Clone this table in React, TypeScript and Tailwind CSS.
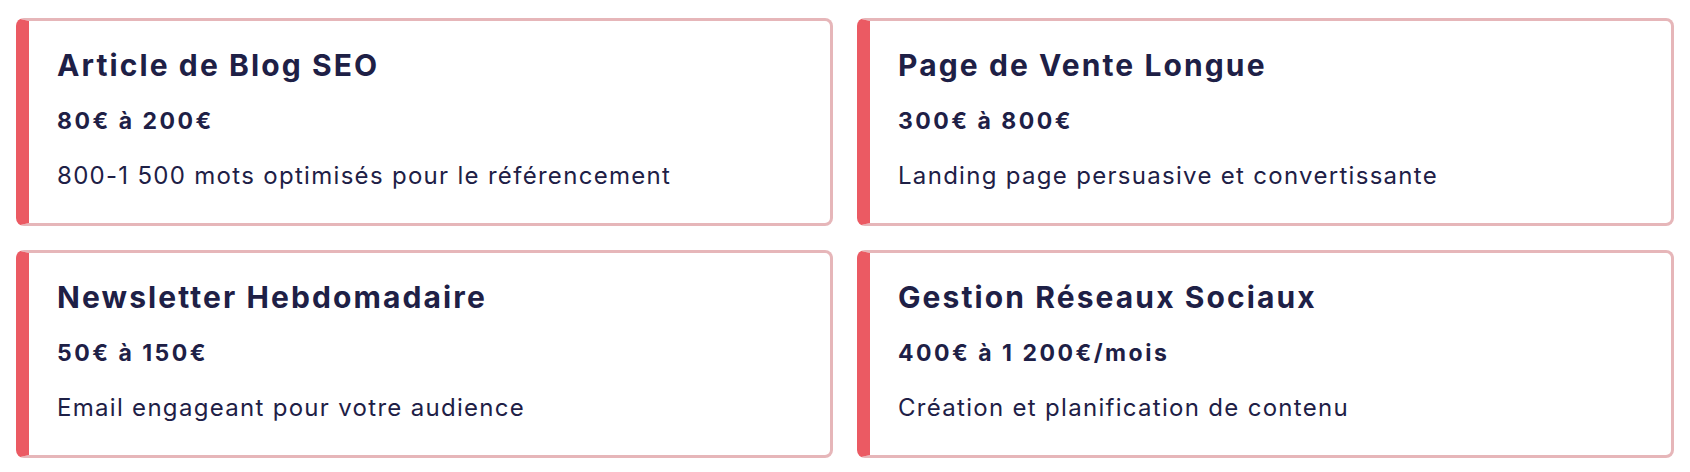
const offers = [
  {
    title: 'Article de Blog SEO',
    price: '80€ à 200€',
    text: '800-1 500 mots optimisés pour le référencement',
  },
  {
    title: 'Page de Vente Longue',
    price: '300€ à 800€',
    text: 'Landing page persuasive et convertissante',
  },
  {
    title: 'Newsletter Hebdomadaire',
    price: '50€ à 150€',
    text: 'Email engageant pour votre audience',
  },
  {
    title: 'Gestion Réseaux Sociaux',
    price: '400€ à 1 200€/mois',
    text: 'Création et planification de contenu',
  },
];

const OfferCard = ({ title, price, text }: { title: string; price: string; text: string }) => (
  <div className="rounded-lg border-[3px] border-l-[13px] border-[#e6b6b9] border-l-[#eb5a63] bg-white pl-[28px] pr-6 pt-[26px] pb-[31px] text-[#1e2046]">
    <h3 className="text-[30px] leading-[36px] font-bold tracking-[2.1px]">{title}</h3>
    <p className="mt-[24px] text-[23px] leading-[28px] font-bold tracking-[2.5px]">{price}</p>
    <p className="mt-[25px] text-[24px] leading-[32px] font-normal tracking-[1.3px]">{text}</p>
  </div>
);

export default function App() {
  return (
    <div className="min-h-screen bg-white px-4 pt-[18px] pb-4 font-['Inter',sans-serif]">
      <div className="grid grid-cols-2 gap-x-6 gap-y-[24px]">
        {offers.map((o) => (
          <OfferCard key={o.title} {...o} />
        ))}
      </div>
    </div>
  );
}
